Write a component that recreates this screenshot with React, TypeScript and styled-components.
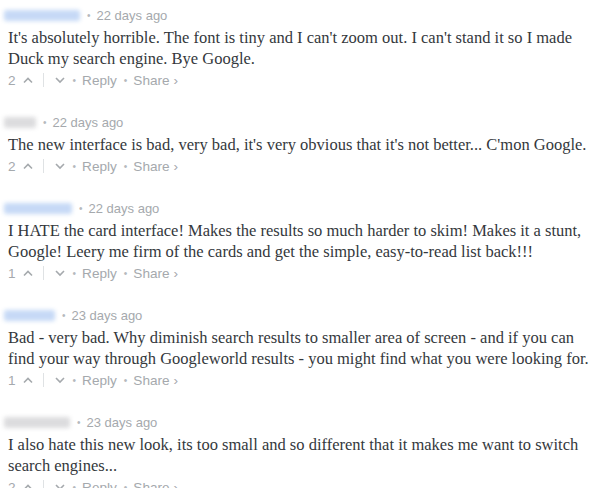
import styled, { createGlobalStyle } from "styled-components";

const Global = createGlobalStyle`
  body {
    margin: 0;
    background: #ffffff;
  }
`;

const List = styled.div`
  width: 596px;
  padding: 6px 0 0 0;
`;

const Comment = styled.div`
  padding: 0 8px 0 8px;
  margin-bottom: 22px;
`;

const Header = styled.div`
  display: flex;
  align-items: center;
  height: 18px;
  margin-left: -4px;
  font-family: "Liberation Sans", Arial, sans-serif;
  font-size: 13px;
  color: #a5a9ad;
`;

const Name = styled.span<{ $w: number; $c: string }>`
  display: inline-block;
  width: ${(p) => p.$w}px;
  height: 11px;
  background: ${(p) => p.$c};
  filter: blur(2px);
  border-radius: 2px;
`;

const Dot = styled.span`
  margin: 0 6px 0 7px;
  font-size: 10px;
  color: #b5b9bd;
`;

const Body = styled.div`
  margin-top: 3px;
  margin-right: -4px;
  font-family: "Liberation Serif", Georgia, serif;
  font-size: 16.5px;
  line-height: 21px;
  color: #34383c;
`;

const Actions = styled.div`
  display: flex;
  align-items: center;
  height: 22px;
  font-family: "Liberation Sans", Arial, sans-serif;
  font-size: 13.6px;
  color: #a5a9ad;
`;

const Count = styled.span`
  margin-right: 6px;
`;

const Vote = styled.span`
  display: inline-flex;
  align-items: center;
`;

const Divider = styled.span`
  display: inline-block;
  width: 1px;
  height: 14px;
  background: #dfe2e4;
  margin: 0 10px 0 9px;
`;

const Link = styled.span``;

const Chevron = ({ up }: { up?: boolean }) => (
  <svg width="12" height="8" viewBox="0 0 12 8">
    <path
      d={up ? "M2 6.5 L6 2.5 L10 6.5" : "M2 2 L6 6 L10 2"}
      fill="none"
      stroke="#a5a9ad"
      strokeWidth="1.6"
    />
  </svg>
);

const comments = [
  {
    w: 76,
    c: "#c6d9f6",
    ago: "22 days ago",
    votes: 2,
    text: "It's absolutely horrible. The font is tiny and I can't zoom out. I can't stand it so I made Duck my search engine. Bye Google.",
  },
  {
    w: 32,
    c: "#dcdcde",
    ago: "22 days ago",
    votes: 2,
    text: "The new interface is bad, very bad, it's very obvious that it's not better... C'mon Google.",
  },
  {
    w: 68,
    c: "#c6d9f6",
    ago: "22 days ago",
    votes: 1,
    text: "I HATE the card interface! Makes the results so much harder to skim! Makes it a stunt, Google! Leery me firm of the cards and get the simple, easy-to-read list back!!!",
  },
  {
    w: 51,
    c: "#c6d9f6",
    ago: "23 days ago",
    votes: 1,
    text: "Bad - very bad. Why diminish search results to smaller area of screen - and if you can find your way through Googleworld results - you might find what you were looking for.",
  },
  {
    w: 66,
    c: "#dcdcde",
    ago: "23 days ago",
    votes: 2,
    text: "I also hate this new look, its too small and so different that it makes me want to switch search engines...",
  },
];

export default function App() {
  return (
    <>
      <Global />
      <List>
        {comments.map((cm, i) => (
          <Comment key={i}>
            <Header>
              <Name $w={cm.w} $c={cm.c} />
              <Dot>•</Dot>
              <span>{cm.ago}</span>
            </Header>
            <Body>{cm.text}</Body>
            <Actions>
              <Count>{cm.votes}</Count>
              <Vote>
                <Chevron up />
              </Vote>
              <Divider />
              <Vote>
                <Chevron />
              </Vote>
              <Dot>•</Dot>
              <Link>Reply</Link>
              <Dot>•</Dot>
              <Link>Share ›</Link>
            </Actions>
          </Comment>
        ))}
      </List>
    </>
  );
}
